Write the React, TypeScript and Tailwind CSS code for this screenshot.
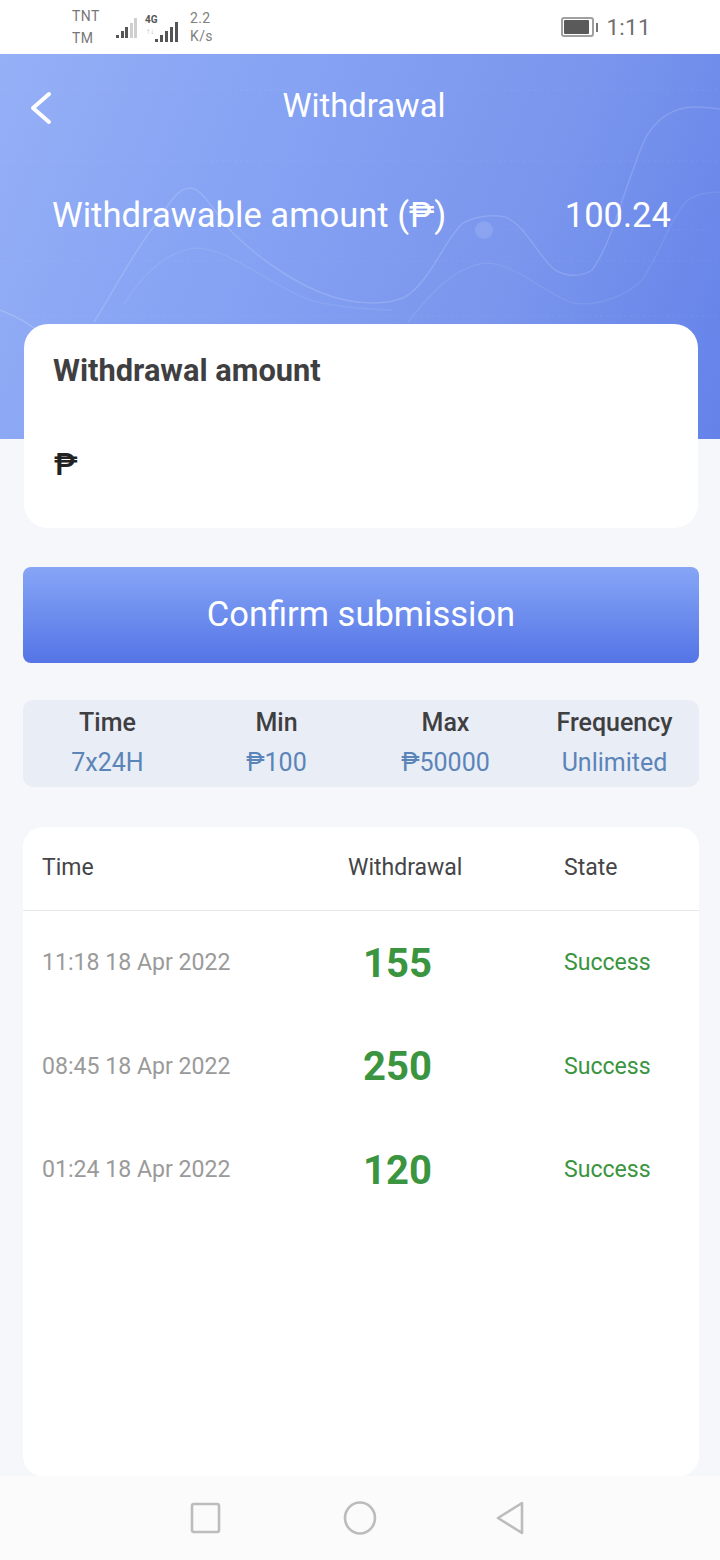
import React from "react";

const font = { fontFamily: "Roboto, 'Noto Sans', sans-serif" };

function Signal({ bars, dim, wide }: { bars: number[]; dim: number; wide?: boolean }) {
  return (
    <div className="flex items-end gap-[1.5px] h-[20px]">
      {bars.map((h, i) => (
        <div
          key={i}
          className={(wide ? "w-[3.4px] " : "w-[3px] ") + (i >= dim ? "bg-[#cfcfcf]" : "bg-[#555555]")}
          style={{ height: h }}
        />
      ))}
    </div>
  );
}

function StatusBar() {
  return (
    <div className="h-[54px] bg-white flex items-center justify-between pl-[72px] pr-[69px] text-[#777777]">
      <div className="flex items-center">
        <div className="w-[38px] text-[14px] leading-[22px] tracking-[0.4px]">
          <div>TNT</div>
          <div>TM</div>
        </div>
        <div className="ml-[6px] mt-[2px]"><Signal bars={[3, 7, 11, 15, 20]} dim={3} /></div>
        <div className="ml-[8px] relative w-[33px] h-[27px]">
          <span className="absolute left-0 top-0 text-[10px] font-bold leading-[12px] text-[#555]">4G</span>
          <span className="absolute left-[1px] top-[13px] text-[8px] leading-[10px] text-[#bbb]">↑↓</span>
          <div className="absolute right-0 -bottom-[1px]"><Signal bars={[3, 7, 11, 15, 20]} dim={5} wide /></div>
        </div>
        <div className="ml-[12px] text-[14px] leading-[18px] tracking-[0.4px] text-[#808080]">
          <div>2.2</div>
          <div>K/s</div>
        </div>
      </div>
      <div className="flex items-center">
        <div className="w-[33px] h-[20px] rounded-[3px] border-2 border-[#a0a0a0] p-[1px]">
          <div className="w-[25px] h-full bg-[#5a5a5a] rounded-[1px]" />
        </div>
        <div className="w-[2px] h-[9px] bg-[#777] ml-[2px]" />
        <div className="ml-[8px] text-[22.5px] leading-none text-[#6f6f6f] tracking-[0.3px]">1:11</div>
      </div>
    </div>
  );
}

function Waves() {
  return (
    <svg className="absolute inset-0 w-full h-full" viewBox="0 0 720 385" fill="none" preserveAspectRatio="none">
      {[36, 107, 176, 207, 262].map((y) => (
        <path key={y} d={`M0 ${y}H720`} stroke="#ffffff" strokeOpacity="0.06" strokeDasharray="3 3" />
      ))}
      <path d="M0 256C12 261 24 266 34 274" stroke="#fff" strokeOpacity="0.18" strokeWidth="1.5" />
      <path
        d="M94 268C115 235 135 195 156 170C168 150 178 134 190 134C203 134 215 160 232 178C262 208 300 232 330 242C355 250 385 252 405 243C430 228 445 185 462 170C472 163 490 160 505 163C525 170 540 205 555 216C565 222 580 224 592 216C612 190 625 130 645 85C655 66 672 53 695 53C705 53 712 54 720 55"
        stroke="#fff"
        strokeOpacity="0.15"
        strokeWidth="1.5"
      />
      <path
        d="M124 250C140 225 165 196 197 194C235 196 280 240 321 249C350 254 372 256 392 256M408 268C430 240 455 212 486 209C515 209 545 240 573 249C600 253 628 240 642 226C660 200 672 160 688 146C698 139 710 138 720 138"
        stroke="#fff"
        strokeOpacity="0.08"
        strokeWidth="1.5"
      />
      <circle cx="484" cy="176" r="9" fill="#fff" fillOpacity="0.12" />
    </svg>
  );
}

function Info({ label, value }: { label: string; value: string }) {
  return (
    <div className="flex-1 text-center">
      <div className="text-[25px] leading-[30px] font-medium text-[#3f3f42] -mt-[2px]">{label}</div>
      <div className="mt-[10px] text-[25px] leading-[30px] text-[#5b84b8]">{value}</div>
    </div>
  );
}

function Row({ time, amount }: { time: string; amount: string }) {
  return (
    <div className="h-[103.5px] flex items-center">
      <div className="w-[300px] pl-[19px] pt-[2px] text-[23.1px] text-[#9a9a9a]">{time}</div>
      <div className="w-[150px] pl-[40px] text-[40px] font-bold text-[#3a9440] tracking-[0.1px] pt-[2px]">{amount}</div>
      <div className="pl-[91px] pt-[2px] text-[23.1px] text-[#3a9440] whitespace-nowrap">Success</div>
    </div>
  );
}

export default function App() {
  return (
    <div className="relative w-[720px] h-[1560px] overflow-hidden bg-[#f6f7fb] flex flex-col" style={font}>
      <StatusBar />
      <div className="relative h-[385px] shrink-0 bg-[linear-gradient(112deg,#95b0f6_0%,#87a4f4_30%,#7a96ed_68%,#6482e9_100%)] text-white">
        <Waves />
        <div className="relative">
          <div className="relative h-[106px] flex items-center justify-center text-[32.8px] pl-[8px]">
            <svg className="absolute left-[29px] top-[36px]" width="24" height="36" viewBox="0 0 24 36" fill="none">
              <path d="M20 4L4 18L20 32" stroke="#fff" strokeWidth="4" strokeLinecap="round" strokeLinejoin="round" />
            </svg>
            Withdrawal
          </div>
          <div className="flex items-center justify-between pl-[52px] pr-[49px] text-[34.6px] leading-[110px]">
            <span>Withdrawable amount (₱)</span>
            <span>100.24</span>
          </div>
        </div>
      </div>

      <div className="relative -mt-[115px] ml-[24px] mr-[22px] h-[204px] rounded-[24px] bg-white pl-[29px] pt-[27px] shrink-0">
        <div className="text-[30.8px] leading-[40px] font-bold text-[#3f3f42]">Withdrawal amount</div>
        <div className="mt-[53px] ml-[1px] text-[32px] leading-[40px] font-medium text-[#222]">₱</div>
      </div>

      <div className="mt-[39px] ml-[23px] mr-[21px] h-[96px] rounded-[8px] bg-gradient-to-b from-[#87a5f6] to-[#5574e6] flex items-center justify-center text-white text-[34.5px] shrink-0">
        Confirm submission
      </div>

      <div className="mt-[37px] ml-[23px] mr-[21px] h-[87px] rounded-[10px] bg-[#e9edf6] flex items-center shrink-0">
        <Info label="Time" value="7x24H" />
        <Info label="Min" value="₱100" />
        <Info label="Max" value="₱50000" />
        <Info label="Frequency" value="Unlimited" />
      </div>

      <div className="mt-[40px] ml-[23px] mr-[21px] flex-1 rounded-[20px] bg-white">
        <div className="h-[84px] border-b border-[#e8e8ea] flex items-center text-[23px] text-[#454548] pb-[1px]">
          <div className="w-[325px] pl-[19px]">Time</div>
          <div className="w-[216px]">Withdrawal</div>
          <div>State</div>
        </div>
        <Row time="11:18 18 Apr 2022" amount="155" />
        <Row time="08:45 18 Apr 2022" amount="250" />
        <Row time="01:24 18 Apr 2022" amount="120" />
      </div>

      <div className="h-[84px] bg-[#fbfbfc] flex items-center justify-center shrink-0 pt-[3px]">
        <svg className="w-[340px] h-[40px]" viewBox="0 0 340 40" fill="none" stroke="#bcbcbc" strokeWidth="2.6">
          <rect x="2" y="4" width="27" height="28" rx="2" />
          <ellipse cx="170" cy="18" rx="15" ry="15.5" />
          <path d="M332 3V33L308 18Z" strokeLinejoin="round" />
        </svg>
      </div>
    </div>
  );
}
